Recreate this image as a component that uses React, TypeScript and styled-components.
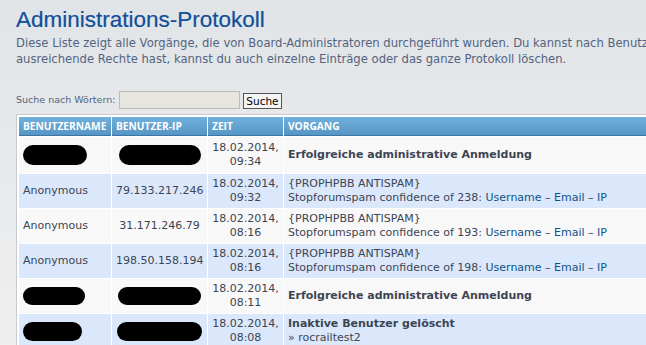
import React from 'react';
import styled, { createGlobalStyle } from 'styled-components';

const GlobalStyle = createGlobalStyle`
  html, body {
    margin: 0;
    padding: 0;
    overflow: hidden;
  }
  body {
    background: linear-gradient(#e1e4e7, #efefef 345px);
    min-height: 345px;
    font-family: "DejaVu Sans", Verdana, sans-serif;
  }
`;

const Page = styled.div`
  width: 800px;
  padding: 7px 0 0 16px;
`;

const Title = styled.h1`
  margin: 0;
  font-family: "Liberation Sans", Arial, sans-serif;
  font-weight: normal;
  font-size: 22.5px;
  line-height: 26px;
  color: #104f99;
  -webkit-text-stroke: 0.2px #104f99;
`;

const Intro = styled.p`
  margin: 2px 0 0;
  font-size: 11.6px;
  line-height: 16px;
  color: #536482;
  white-space: nowrap;
`;

const SearchBar = styled.form`
  display: flex;
  align-items: center;
  margin-top: 23px;
  height: 19px;
`;

const SearchLabel = styled.label`
  font-size: 9.5px;
  color: #536482;
  margin-right: 4px;
`;

const SearchInput = styled.input`
  box-sizing: border-box;
  width: 121px;
  height: 18px;
  margin: 0;
  border: 1px solid #bdbcb6;
  background: #e7e5df;
`;

const SearchButton = styled.button`
  box-sizing: border-box;
  height: 16px;
  margin: 2px 0 0 3px;
  padding: 0 2px;
  border: 1px solid #555;
  background: #f4f4f4;
  font-family: "DejaVu Sans", Verdana, sans-serif;
  font-size: 10.5px;
  line-height: 14px;
  color: #000;
`;

const TableFrame = styled.div`
  margin-top: 5px;
  width: 780px;
  border: 1px solid #c7cbd0;
  border-right: none;
  padding: 1px 0 0 1px;
  background: #fff;
`;

const Table = styled.table`
  width: 100%;
  table-layout: fixed;
  border-collapse: separate;
  border-spacing: 1px;
  background: #fff;
  margin: -1px 0 0 -1px;
  padding: 1px 0 0 1px;
`;

const HeadCell = styled.th`
  height: 19px;
  padding: 0 4px;
  box-sizing: border-box;
  background: linear-gradient(#71b1dc, #5796c4);
  border-bottom: 1px solid #3b76a6;
  color: #fff;
  font-family: "Open Sans", sans-serif;
  font-weight: bold;
  font-size: 10.2px;
  text-align: left;
  text-transform: uppercase;
  white-space: nowrap;
`;

const Row = styled.tr<{ $alt?: boolean; $tall?: boolean }>`
  background: ${p => (p.$alt ? '#dbe8fb' : '#f8f8f8')};
  height: ${p => (p.$tall ? '36px' : '34px')};
`;

const Cell = styled.td<{ $align?: 'left' | 'center' }>`
  padding: 3px 4px;
  font-size: 11px;
  line-height: 14px;
  color: #3d4553;
  text-align: ${p => p.$align ?? 'left'};
  vertical-align: middle;
  white-space: nowrap;
`;

const Strong = styled.strong`
  font-weight: bold;
  color: #3d4553;
`;

const Line = styled.span`
  display: block;
`;

const Link = styled.a`
  color: #105289;
  text-decoration: none;
`;

const Redacted = styled.span<{ $w: number; $h: number }>`
  display: inline-block;
  vertical-align: middle;
  width: ${p => p.$w}px;
  height: ${p => p.$h}px;
  border-radius: ${p => p.$h / 2}px;
  background: #000;
`;

type Entry = {
  user: string | null;
  ip: string | null;
  date: string;
  time: string;
  kind: 'login' | 'spam' | 'prune';
  extra?: string;
  redact?: [number, number, number, number];
  tall?: boolean;
};

const entries: Entry[] = [
  { user: null, ip: null, date: '18.02.2014,', time: '09:34', kind: 'login', redact: [64, 20, 82, 20], tall: true },
  { user: 'Anonymous', ip: '79.133.217.246', date: '18.02.2014,', time: '09:32', kind: 'spam', extra: '238' },
  { user: 'Anonymous', ip: '31.171.246.79', date: '18.02.2014,', time: '08:16', kind: 'spam', extra: '193' },
  { user: 'Anonymous', ip: '198.50.158.194', date: '18.02.2014,', time: '08:16', kind: 'spam', extra: '198' },
  { user: null, ip: null, date: '18.02.2014,', time: '08:11', kind: 'login', redact: [62, 18, 83, 18] },
  { user: null, ip: null, date: '18.02.2014,', time: '08:08', kind: 'prune', extra: 'rocrailtest2', redact: [59, 19, 85, 19] },
];

const Action: React.FC<{ entry: Entry }> = ({ entry }) => {
  if (entry.kind === 'login') {
    return <Strong>Erfolgreiche administrative Anmeldung</Strong>;
  }
  if (entry.kind === 'prune') {
    return (
      <>
        <Line><Strong>Inaktive Benutzer gelöscht</Strong></Line>
        <Line>» {entry.extra}</Line>
      </>
    );
  }
  return (
    <>
      <Line>{'{PROPHPBB ANTISPAM}'}</Line>
      <Line>
        Stopforumspam confidence of {entry.extra}: <Link href="#">Username</Link> – <Link href="#">Email</Link> – <Link href="#">IP</Link>
      </Line>
    </>
  );
};

const App: React.FC = () => (
  <>
    <GlobalStyle />
    <Page>
      <Title>Administrations-Protokoll</Title>
      <Intro>
        Diese Liste zeigt alle Vorgänge, die von Board-Administratoren durchgeführt wurden. Du kannst nach Benutzernamen, Datum, IP oder Vorgang sortieren. Wenn du
        <br />
        ausreichende Rechte hast, kannst du auch einzelne Einträge oder das ganze Protokoll löschen.
      </Intro>
      <SearchBar onSubmit={e => e.preventDefault()}>
        <SearchLabel htmlFor="keywords">Suche nach Wörtern:</SearchLabel>
        <SearchInput id="keywords" type="text" />
        <SearchButton type="submit">Suche</SearchButton>
      </SearchBar>
      <TableFrame>
        <Table>
          <colgroup>
            <col style={{ width: 92 }} />
            <col style={{ width: 95 }} />
            <col style={{ width: 75 }} />
            <col />
          </colgroup>
          <thead>
            <tr>
              <HeadCell>Benutzername</HeadCell>
              <HeadCell>Benutzer-IP</HeadCell>
              <HeadCell>Zeit</HeadCell>
              <HeadCell>Vorgang</HeadCell>
            </tr>
          </thead>
          <tbody>
            {entries.map((entry, i) => (
              <Row key={i} $alt={i % 2 === 1} $tall={entry.tall}>
                <Cell>
                  {entry.redact ? <Redacted $w={entry.redact[0]} $h={entry.redact[1]} /> : entry.user}
                </Cell>
                <Cell $align="center">
                  {entry.redact ? <Redacted $w={entry.redact[2]} $h={entry.redact[3]} /> : entry.ip}
                </Cell>
                <Cell $align="center">
                  <Line>{entry.date}</Line>
                  <Line>{entry.time}</Line>
                </Cell>
                <Cell>
                  <Action entry={entry} />
                </Cell>
              </Row>
            ))}
          </tbody>
        </Table>
      </TableFrame>
    </Page>
  </>
);

export default App;
